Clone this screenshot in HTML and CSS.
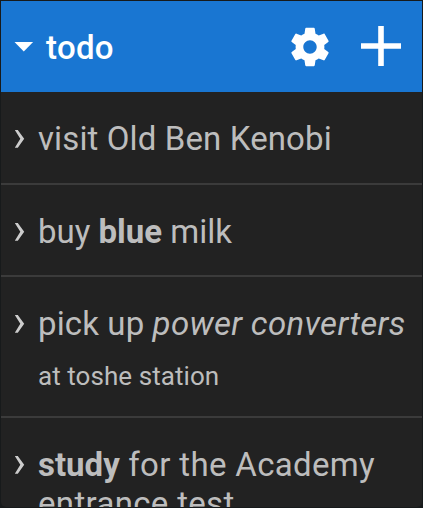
FILE: index.html
```html
<!DOCTYPE html>
<html lang="en">
<head>
<meta charset="utf-8">
<title>todo</title>
<link rel="stylesheet" href="styles.css">
</head>
<body>
<main class="widget">
  <header class="bar">
    <svg class="caret" width="20" height="12" viewBox="0 0 20 12"><path d="M.5 1h18.6l-9.3 9.5z" fill="#fff"/></svg>
    <h1 class="title">todo</h1>
    <svg class="gear" width="46" height="46" viewBox="0 0 24 24"><path fill="#fff" d="M19.43 12.98c.04-.32.07-.64.07-.98s-.03-.66-.07-.98l2.11-1.65c.19-.15.24-.42.12-.64l-2-3.46c-.12-.22-.39-.3-.61-.22l-2.49 1c-.52-.4-1.08-.73-1.69-.98l-.38-2.65C14.46 2.18 14.25 2 14 2h-4c-.25 0-.46.18-.49.42l-.38 2.65c-.61.25-1.17.59-1.69.98l-2.49-1c-.23-.09-.49 0-.61.22l-2 3.46c-.13.22-.07.49.12.64l2.11 1.65c-.04.32-.07.65-.07.98s.03.66.07.98l-2.11 1.65c-.19.15-.24.42-.12.64l2 3.46c.12.22.39.3.61.22l2.49-1c.52.4 1.08.73 1.69.98l.38 2.65c.03.24.24.42.49.42h4c.25 0 .46-.18.49-.42l.38-2.65c.61-.25 1.17-.59 1.69-.98l2.49 1c.23.09.49 0 .61-.22l2-3.46c.12-.22.07-.49-.12-.64l-2.11-1.65zM12 15.5c-1.93 0-3.5-1.57-3.5-3.5s1.57-3.5 3.5-3.5 3.5 1.57 3.5 3.5-1.57 3.5-3.5 3.5z"/></svg>
    <svg class="plus" width="40" height="40" viewBox="0 0 40 40"><path d="M17.2 0h5.6v17.2H40v5.6H22.8V40h-5.6V22.8H0v-5.6h17.2z" fill="#fff"/></svg>
  </header>
  <ul class="list">
    <li class="item">
      <svg class="chevron" width="12" height="20" viewBox="0 0 12 20"><path d="M.8 1h3l6.4 8.8-6.4 8.9h-3l5.5-8.9z"/></svg>
      <p class="text">visit Old Ben Kenobi</p>
    </li>
    <li class="item">
      <svg class="chevron" width="12" height="20" viewBox="0 0 12 20"><path d="M.8 1h3l6.4 8.8-6.4 8.9h-3l5.5-8.9z"/></svg>
      <p class="text tight">buy <b>blue</b> milk</p>
    </li>
    <li class="item noted">
      <svg class="chevron" width="12" height="20" viewBox="0 0 12 20"><path d="M.8 1h3l6.4 8.8-6.4 8.9h-3l5.5-8.9z"/></svg>
      <div class="content">
        <p class="text">pick up <i>power converters</i></p>
        <p class="note">at toshe station</p>
      </div>
    </li>
    <li class="item">
      <svg class="chevron" width="12" height="20" viewBox="0 0 12 20"><path d="M.8 1h3l6.4 8.8-6.4 8.9h-3l5.5-8.9z"/></svg>
      <p class="text loose"><b>study</b> for the Academy entrance test</p>
    </li>
  </ul>
</main>
</body>
</html>
```
FILE: styles.css
```css
* { box-sizing: border-box; }
body {
  margin: 0;
  height: 508px;
  padding: 1px;
  overflow: hidden;
  background: #171a1b;
  font-family: Roboto, sans-serif;
}
.widget {
  height: 506px;
  overflow: hidden;
  background: #222;
  border-radius: 0 0 5px 5px;
}
.bar {
  display: flex;
  align-items: center;
  height: 91px;
  padding: 0 21px 0 13px;
  background: #1976d2;
  color: #fff;
}
.caret { margin-top: 1px; }
.title {
  flex: 1;
  margin: 2px 0 0 12px;
  font-size: 33px;
  font-weight: 500;
  line-height: 39px;
  letter-spacing: .3px;
}
.gear { margin-right: 28px; }
.plus { margin-bottom: 1px; }
.list {
  margin: 0;
  padding: 0;
  list-style: none;
}
.item {
  display: flex;
  align-items: flex-start;
  min-height: 92.5px;
  padding: 27px 10px 24px 13px;
  border-bottom: 2px solid #3b3b3b;
  color: #bdbdbd;
}
.noted { min-height: 141px; }
.chevron {
  flex: none;
  margin: 10px 12px 0 0;
  fill: #ccc;
}
.text {
  margin: 0;
  font-size: 33px;
  line-height: 39px;
  letter-spacing: .12px;
}
.text i { letter-spacing: .33px; }
.tight { letter-spacing: 0; }
.loose { letter-spacing: .33px; }
.loose b { letter-spacing: 0; }
.note {
  margin: 18px 0 0;
  font-size: 26px;
  line-height: 30px;
  letter-spacing: .06px;
}
```
